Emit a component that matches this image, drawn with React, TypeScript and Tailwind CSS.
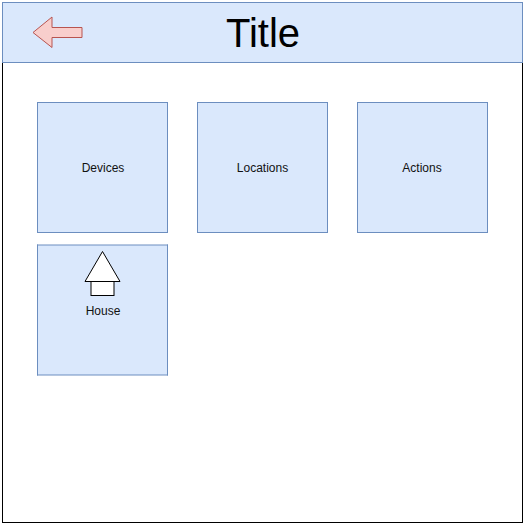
const cards = [
  { name: 'Devices', nudge: 'pl-px' },
  { name: 'Locations', nudge: '' },
  { name: 'Actions', nudge: 'pr-px' },
];

function BackArrow() {
  return (
    <svg width="54" height="37" viewBox="30 14 54 37" className="block" aria-label="Back">
      <path
        d="M82 27.5 V37.5 H52 V47.5 L33 32.5 L52 17 V27.5 Z"
        fill="#f8cecc"
        stroke="#b85450"
        strokeMiterlimit="10"
      />
    </svg>
  );
}

function HouseIcon() {
  return (
    <svg width="41" height="48" viewBox="82 250 41 48" className="block">
      <rect x="91" y="281.5" width="23" height="14" fill="#fff" stroke="#000" />
      <path d="M85 281.5 L102.5 251.5 L120 281.5 Z" fill="#fff" stroke="#000" strokeMiterlimit="10" />
    </svg>
  );
}

export default function App() {
  return (
    <div className="h-[526px] w-[525px] bg-white pl-[2px] pt-[2px] font-['Liberation_Sans',Arial,sans-serif] text-black">
      <div className="h-[521px] w-[521px] border border-black">
        <header className="-mx-px -mt-px grid h-[61px] grid-cols-[1fr_auto_1fr] items-center border border-[#6c8ebf] bg-[#dae8fc]">
          <button className="ml-[27px] w-[54px]">
            <BackArrow />
          </button>
          <h1 className="pl-px text-[40px] leading-[48px]">Title</h1>
        </header>
        <main className="pl-[34px] pt-[39px] text-xs text-[#111]">
          <div className="flex gap-[29px]">
            {cards.map(({ name, nudge }) => (
              <div
                key={name}
                className={`flex h-[131px] w-[131px] items-center justify-center border border-[#6c8ebf] bg-[#dae8fc] ${nudge}`}
              >
                {name}
              </div>
            ))}
          </div>
          <div className="mt-[11px] flex h-[132px] w-[131px] flex-col items-center border border-x-[#6c8ebf] border-y-[#b5c6df] bg-[#dae8fc] pt-[5px] shadow-[inset_0_1px_0_#a3bbde,inset_0_-1px_0_#a3bbde]">
            <HouseIcon />
            <span className="mt-[5px] pl-px">House</span>
          </div>
        </main>
      </div>
    </div>
  );
}
